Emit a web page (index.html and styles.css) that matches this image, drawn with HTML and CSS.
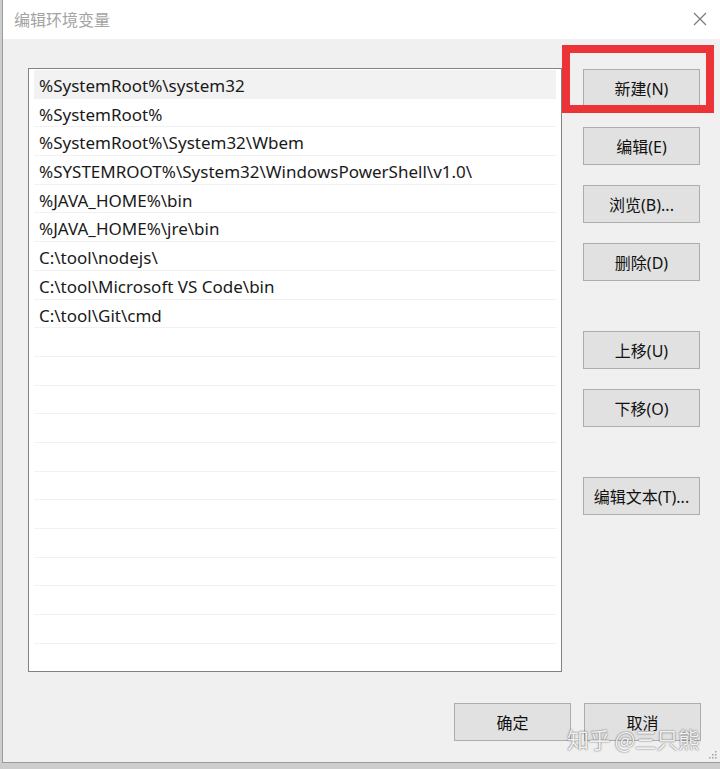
FILE: index.html
```html
<!DOCTYPE html>
<html lang="zh-CN">
  <head>
    <meta charset="UTF-8" />
    <meta name="viewport" content="width=device-width, initial-scale=1.0" />
    <title>编辑环境变量</title>
    <link rel="stylesheet" href="styles.css">
  </head>
  <body>
    <div class="window">
      <header class="titlebar">
        <span class="title">编辑环境变量</span>
        <svg class="close" width="14" height="14" viewBox="0 0 14 14">
          <path d="M1 1L13 13M13 1L1 13" stroke="#7a7a7a" stroke-width="1.2" fill="none" />
        </svg>
      </header>
      <div class="body">
        <div class="main">
          <ul class="list">
            <li class="row selected">%SystemRoot%\system32</li>
            <li class="row">%SystemRoot%</li>
            <li class="row">%SystemRoot%\System32\Wbem</li>
            <li class="row">%SYSTEMROOT%\System32\WindowsPowerShell\v1.0\</li>
            <li class="row">%JAVA_HOME%\bin</li>
            <li class="row">%JAVA_HOME%\jre\bin</li>
            <li class="row">C:\tool\nodejs\</li>
            <li class="row">C:\tool\Microsoft VS Code\bin</li>
            <li class="row">C:\tool\Git\cmd</li>
            <li class="row"></li>
            <li class="row"></li>
            <li class="row"></li>
            <li class="row"></li>
            <li class="row"></li>
            <li class="row"></li>
            <li class="row"></li>
            <li class="row"></li>
            <li class="row"></li>
            <li class="row"></li>
            <li class="row"></li>
            <li class="row"></li>
            <li class="row"></li>
          </ul>
          <div class="actions">
            <button class="btn">新建(N)</button>
            <button class="btn">编辑(E)</button>
            <button class="btn">浏览(B)...</button>
            <button class="btn">删除(D)</button>
            <button class="btn gap-lg">上移(U)</button>
            <button class="btn">下移(O)</button>
            <button class="btn gap-lg">编辑文本(T)...</button>
          </div>
        </div>
        <footer class="footer">
          <button class="btn">确定</button>
          <button class="btn">取消</button>
        </footer>
      </div>
      <div class="highlight"></div>
      <div class="watermark">知乎 @三只熊</div>
      <svg class="grip" width="8" height="8" viewBox="0 0 8 8">
        <rect x="6" y="0" width="1.5" height="1.5" fill="#a0a0a0" />
        <rect x="3" y="3" width="1.5" height="1.5" fill="#a0a0a0" />
        <rect x="6" y="3" width="1.5" height="1.5" fill="#a0a0a0" />
        <rect x="0" y="6" width="1.5" height="1.5" fill="#a0a0a0" />
        <rect x="3" y="6" width="1.5" height="1.5" fill="#a0a0a0" />
        <rect x="6" y="6" width="1.5" height="1.5" fill="#a0a0a0" />
      </svg>
    </div>
  </body>
</html>
```

FILE: styles.css
```css
body {
  margin: 0;
  width: 720px;
  height: 769px;
  overflow: hidden;
  background: #cdcdcd;
  font-family: "Noto Sans", "Noto Sans CJK SC", sans-serif;
  color: #1a1a1a;
}
.window {
  position: relative;
  margin-left: 2px;
  height: 762px;
  border-left: 1px solid #9b9b9b;
  border-bottom: 1px solid #9b9b9b;
  display: flex;
  flex-direction: column;
}
.titlebar {
  height: 39px;
  flex-shrink: 0;
  background: #fff;
  display: flex;
  align-items: center;
  justify-content: space-between;
  padding: 0 13px 2px 11px;
  box-sizing: border-box;
}
.title {
  font-family: "Noto Sans CJK SC", sans-serif;
  font-size: 16px;
  color: #a3a3a3;
}
.body {
  flex: 1;
  background: #f0f0f0;
  display: flex;
  flex-direction: column;
}
.main {
  display: flex;
  gap: 21px;
  padding: 29px 20px 0 25px;
}
.list {
  list-style: none;
  margin: 0;
  padding: 1px 5px 0;
  width: 534px;
  height: 604px;
  box-sizing: border-box;
  border: 1px solid #828282;
  background: #fff;
  overflow: hidden;
}
.row {
  height: 28.7px;
  box-sizing: border-box;
  border-bottom: 1px solid #f1f1f1;
  padding: 1px 0 0 5px;
  font-size: 17px;
  line-height: 29px;
  white-space: nowrap;
}
.row.selected {
  background: #f2f2f2;
}
.actions {
  display: flex;
  flex-direction: column;
  gap: 20px;
  padding-top: 1px;
}
.btn {
  width: 117px;
  height: 38px;
  background: #e1e1e1;
  border: 1px solid #adadad;
  font-family: "Noto Sans", "Noto Sans CJK SC", sans-serif;
  font-size: 16px;
  color: #111;
  padding: 0;
}
.actions .gap-lg {
  margin-top: 30px;
}
.footer {
  display: flex;
  justify-content: flex-end;
  gap: 13px;
  padding: 31px 19px 0 0;
}
.highlight {
  position: absolute;
  left: 559px;
  top: 45px;
  width: 152px;
  height: 68px;
  box-sizing: border-box;
  border: 8px solid #ec3438;
}
.watermark {
  position: absolute;
  left: 564px;
  top: 722px;
  font-family: "Noto Sans CJK SC", sans-serif;
  font-size: 22px;
  letter-spacing: -0.5px;
  color: rgba(255, 255, 255, 0.92);
  text-shadow: 0 0 2px rgba(0, 0, 0, 0.45), 0 0 1px rgba(0, 0, 0, 0.4);
  white-space: nowrap;
}
.grip {
  position: absolute;
  right: 3px;
  bottom: 3px;
}
```
